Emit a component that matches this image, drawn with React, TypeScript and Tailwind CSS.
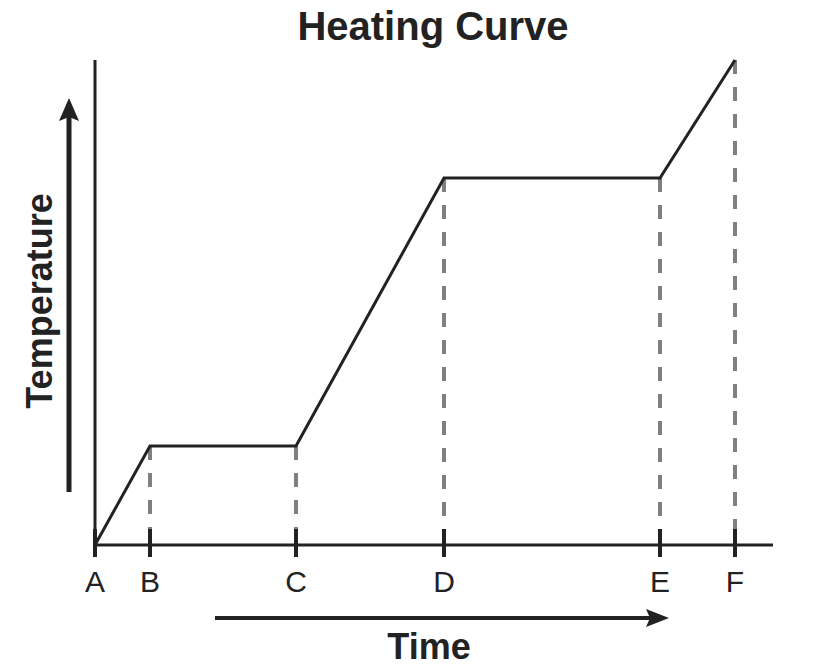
const ticks = [
  { label: 'A', x: 95 },
  { label: 'B', x: 150 },
  { label: 'C', x: 296 },
  { label: 'D', x: 444 },
  { label: 'E', x: 660 },
  { label: 'F', x: 735 },
];

// points of the curve; guides drop from each one except A
const points: [number, number][] = [
  [95, 545],
  [150, 446],
  [296, 446],
  [444, 178],
  [660, 178],
  [735, 60],
];

const font = '"Liberation Sans", Arial, Helvetica, sans-serif';

export default function App() {
  return (
    <div className="flex h-[664px] w-[840px] flex-col bg-white text-[#222]">
      <h1 className="h-[52px] pl-[26px] pt-[6px] text-center font-['Liberation_Sans',Arial,sans-serif] text-[40px] font-bold leading-none">
        Heating Curve
      </h1>
      <svg width={840} height={612} viewBox="0 52 840 612" className="block">
        {/* vertical guides */}
        {points.slice(1).map(([x, y]) => (
          <line key={x} x1={x} y1={y} x2={x} y2={529} stroke="#808080" strokeWidth={4} strokeDasharray="14 13" />
        ))}

        {/* axes */}
        <line x1={95} y1={60} x2={95} y2={546} stroke="#222" strokeWidth={3} />
        <line x1={94} y1={545} x2={773} y2={545} stroke="#222" strokeWidth={3} />
        {ticks.map((t) => (
          <line key={t.label} x1={t.x} y1={529} x2={t.x} y2={557} stroke="#222" strokeWidth={4} />
        ))}

        {/* curve */}
        <polyline
          points={points.map((p) => p.join(',')).join(' ')}
          fill="none"
          stroke="#222"
          strokeWidth={3}
          strokeLinejoin="miter"
        />

        {/* temperature arrow */}
        <line x1={69} y1={492} x2={69} y2={115} stroke="#222" strokeWidth={5} />
        <polygon points="69,98 79,121 69,117 59,121" fill="#222" />

        {/* time arrow */}
        <line x1={215} y1={618} x2={652} y2={618} stroke="#222" strokeWidth={4} />
        <polygon points="669,618 646,609 650,618 646,627" fill="#222" />

        {ticks.map((t) => (
          <text key={t.label} x={t.x} y={592} textAnchor="middle" fontFamily={font} fontSize={30} fill="#222">
            {t.label}
          </text>
        ))}

        <text
          transform="translate(52 301) rotate(-90)"
          textAnchor="middle"
          fontFamily={font}
          fontSize={36}
          fontWeight={700}
          fill="#222"
        >
          Temperature
        </text>
        <text x={429} y={659} textAnchor="middle" fontFamily={font} fontSize={36} fontWeight={700} fill="#222">
          Time
        </text>
      </svg>
    </div>
  );
}
